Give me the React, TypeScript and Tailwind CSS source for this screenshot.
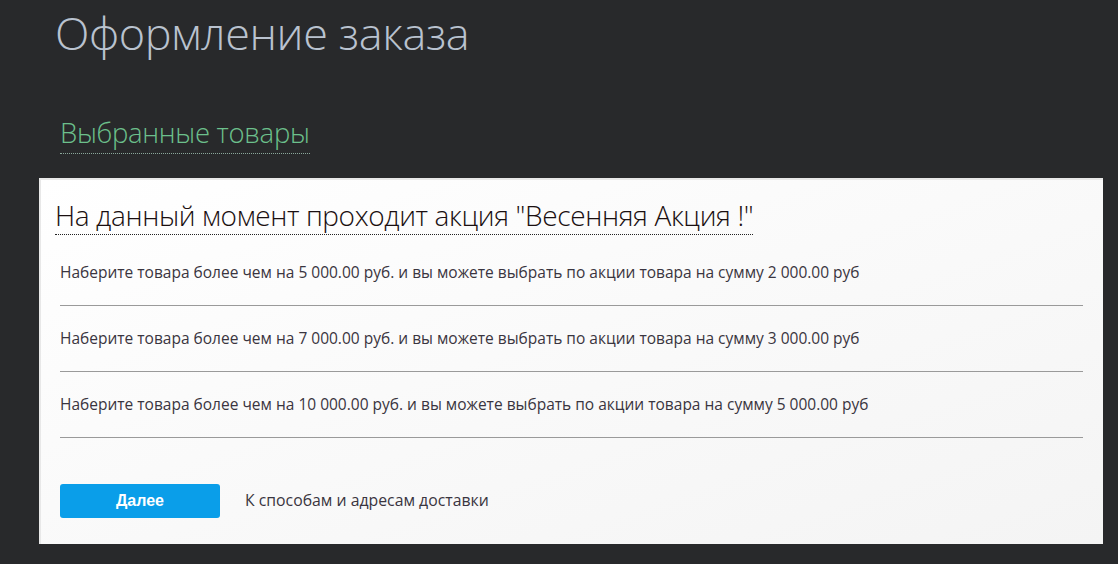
export default function App() {
  const offers = [
    { from: "5 000.00", sum: "2 000.00" },
    { from: "7 000.00", sum: "3 000.00" },
    { from: "10 000.00", sum: "5 000.00" },
  ];

  return (
    <div className="min-h-[564px] w-[1118px] bg-[#28292b] font-['Open_Sans',sans-serif] overflow-hidden">
      <h1 className="pl-[55px] pt-[4px] text-[45px] leading-[58px] font-light text-[#b9c2cf] tracking-[-0.4px]">
        Оформление заказа
      </h1>

      <div className="pl-[60px] pt-[54px] pb-[28px]">
        <span className="text-[27.5px] leading-[34px] font-light text-[#6cc08c] border-b border-dotted border-[#8aa79a] pb-[2px] tracking-[-0.3px]">
          Выбранные товары
        </span>
      </div>

      <div className="ml-[39px] w-[1064px] h-[366px] bg-gradient-to-br from-[#ffffff] to-[#f4f4f4] border-t-2 border-l-2 border-[#e8e8e8]">
        <div className="pl-[14px] pt-[18px]">
          <span className="text-[28px] leading-[34px] font-light text-[#1a0f10] border-b border-dotted border-[#222] tracking-[-0.38px]">
            На данный момент проходит акция "Весенняя Акция !"
          </span>
        </div>

        <div className="pl-[19px] pr-[20px] pt-[8px]">
          {offers.map((o, i) => (
            <div
              key={i}
              className="h-[66px] flex items-center border-b border-[#9a9a9a] text-[15.5px] text-[#3a3540]"
            >
              Наберите товара более чем на {o.from} руб. и вы можете выбрать по акции товара на сумму {o.sum} руб
            </div>
          ))}
        </div>

        <div className="pl-[19px] pt-[46px] flex items-center gap-[25px]">
          <button className="w-[160px] h-[34px] rounded-[3px] bg-[#0a9ee9] text-white font-bold text-[16px] font-['Liberation_Sans',sans-serif]">
            Далее
          </button>
          <span className="text-[15.8px] text-[#3a3540]">
            К способам и адресам доставки
          </span>
        </div>
      </div>
    </div>
  );
}
